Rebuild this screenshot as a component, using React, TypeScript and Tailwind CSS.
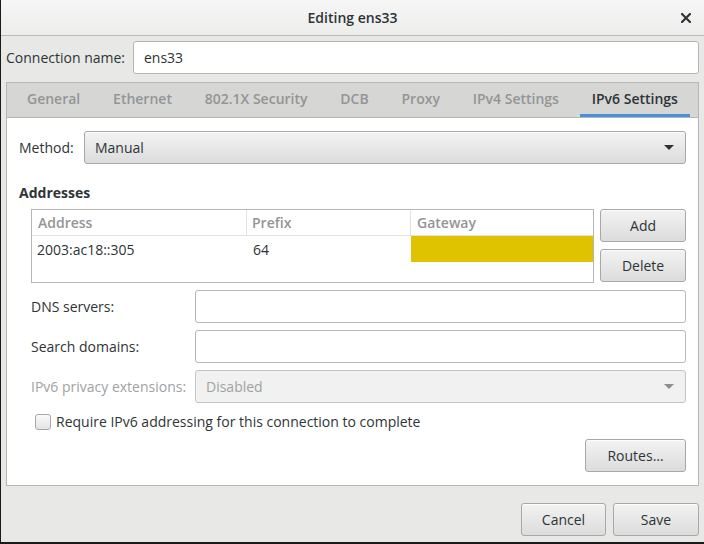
import React from 'react';

const tabs = ["General", "Ethernet", "802.1X Security", "DCB", "Proxy", "IPv4 Settings", "IPv6 Settings"];

function Btn({ children, className = "" }: { children: React.ReactNode; className?: string }) {
    return (
        <div className={`flex items-center justify-center h-[33px] rounded-[3px] border border-[#a8a8a8] bg-gradient-to-b from-[#f3f3f3] to-[#dcdcdc] text-[#2e3436] shadow-[inset_0_1px_0_rgba(255,255,255,0.8)] ${className}`}>
            {children}
        </div>
    );
}

function Entry({ children, className = "" }: { children?: React.ReactNode; className?: string }) {
    return (
        <div className={`flex items-center h-[33px] rounded-[3px] border border-[#b6b6b3] bg-white px-[10px] ${className}`}>
            {children}
        </div>
    );
}

function Arrow({ color }: { color: string }) {
    return (
        <svg width="12" height="7" viewBox="0 0 12 7" className="ml-auto">
            <polygon points="1,1 11,1 6,6" fill={color} />
        </svg>
    );
}

export default function App() {
    return (
        <div className="w-[704px] h-[544px] bg-[#1b1b1b] pl-px pb-[2px] text-[14px] text-[#2e3436]" style={{ fontFamily: '"Open Sans", "DejaVu Sans", sans-serif' }}>
            <div className="h-full flex flex-col bg-[#e8e8e7]">
                {/* title bar */}
                <div className="relative h-[36px] shrink-0 flex items-center justify-center bg-gradient-to-b from-[#f6f6f6] to-[#ededec] border-b border-[#b9b9b6]">
                    <span className="font-semibold text-[14px] text-[#2e3436]">Editing ens33</span>
                    <svg width="10" height="10" viewBox="0 0 10 10" className="absolute right-[13px] top-[13px]">
                        <path d="M1 1 L9 9 M9 1 L1 9" stroke="#2e3436" strokeWidth="2.2" strokeLinecap="square" />
                    </svg>
                </div>

                <div className="flex-1 flex flex-col px-[5px] pt-[5px]">
                    {/* connection name */}
                    <div className="flex items-center">
                        <span className="w-[127px] shrink-0">Connection name:</span>
                        <Entry className="flex-1">ens33</Entry>
                    </div>

                    {/* notebook */}
                    <div className="mt-[8px] flex flex-col border border-[#b6b6b3]">
                        <div className="h-[35px] flex items-stretch justify-between pl-[8px] pr-[8px] bg-[#d6d6d5] border-b border-[#b6b6b3]">
                            {tabs.map((t) => (
                                <div
                                    key={t}
                                    className={`flex items-center px-[12px] border-b-[3px] ${t === "IPv6 Settings" ? "border-[#4a90d9] font-semibold text-[#2e3436]" : "border-transparent font-semibold text-[#939595]"}`}
                                >
                                    {t}
                                </div>
                            ))}
                        </div>

                        <div className="h-[367px] bg-white flex flex-col px-[12px] pt-[13px]">
                            {/* method */}
                            <div className="flex items-center">
                                <span className="w-[65px] shrink-0">Method:</span>
                                <Btn className="flex-1 justify-start px-[10px]">
                                    <span>Manual</span>
                                    <Arrow color="#2e3436" />
                                </Btn>
                            </div>

                            <div className="mt-[18px] font-bold">Addresses</div>

                            <div className="mt-[6px] ml-[12px] flex gap-[6px]">
                                <div className="w-[564px] h-[74px] border border-[#b6b6b3] bg-white">
                                    <div className="flex h-[26px] border-b border-[#e2e2e2] font-semibold text-[#939595]">
                                        <div className="w-[215px] px-[6px] flex items-center border-r border-[#e2e2e2]">Address</div>
                                        <div className="w-[164px] px-[5px] flex items-center border-r border-[#e2e2e2]">Prefix</div>
                                        <div className="flex-1 px-[6px] flex items-center">Gateway</div>
                                    </div>
                                    <div className="flex h-[26px]">
                                        <div className="w-[215px] px-[5px] flex items-center">2003:ac18::305</div>
                                        <div className="w-[164px] px-[6px] flex items-center">64</div>
                                        <div className="flex-1 bg-[#dfc200]"></div>
                                    </div>
                                </div>
                                <div className="flex flex-col gap-[7px] w-[86px]">
                                    <Btn>Add</Btn>
                                    <Btn>Delete</Btn>
                                </div>
                            </div>

                            <div className="mt-[7px] ml-[12px] flex flex-col gap-[7px]">
                                <div className="flex items-center">
                                    <span className="w-[164px] shrink-0">DNS servers:</span>
                                    <Entry className="flex-1" />
                                </div>
                                <div className="flex items-center">
                                    <span className="w-[164px] shrink-0">Search domains:</span>
                                    <Entry className="flex-1" />
                                </div>
                                <div className="flex items-center">
                                    <span className="w-[164px] shrink-0 text-[#a0a2a2]">IPv6 privacy extensions:</span>
                                    <div className="flex-1 flex items-center h-[33px] rounded-[3px] border border-[#c4c4c2] bg-[#f1f1f1] px-[10px] text-[#a0a2a2]">
                                        <span>Disabled</span>
                                        <Arrow color="#8b8e8f" />
                                    </div>
                                </div>
                            </div>

                            <div className="mt-[8px] ml-[16px] flex items-center gap-[5px]">
                                <div className="w-[16px] h-[16px] rounded-[3px] border border-[#a8a8a8] bg-gradient-to-b from-[#fafafa] to-[#e4e4e4]"></div>
                                <span>Require IPv6 addressing for this connection to complete</span>
                            </div>

                            <div className="mt-[7px] flex justify-end">
                                <Btn className="w-[101px]">Routes…</Btn>
                            </div>
                        </div>
                    </div>

                    {/* dialog buttons */}
                    <div className="mt-[17px] flex justify-end gap-[7px]">
                        <Btn className="w-[85px]">Cancel</Btn>
                        <Btn className="w-[86px]">Save</Btn>
                    </div>
                </div>
            </div>
        </div>
    );
}
